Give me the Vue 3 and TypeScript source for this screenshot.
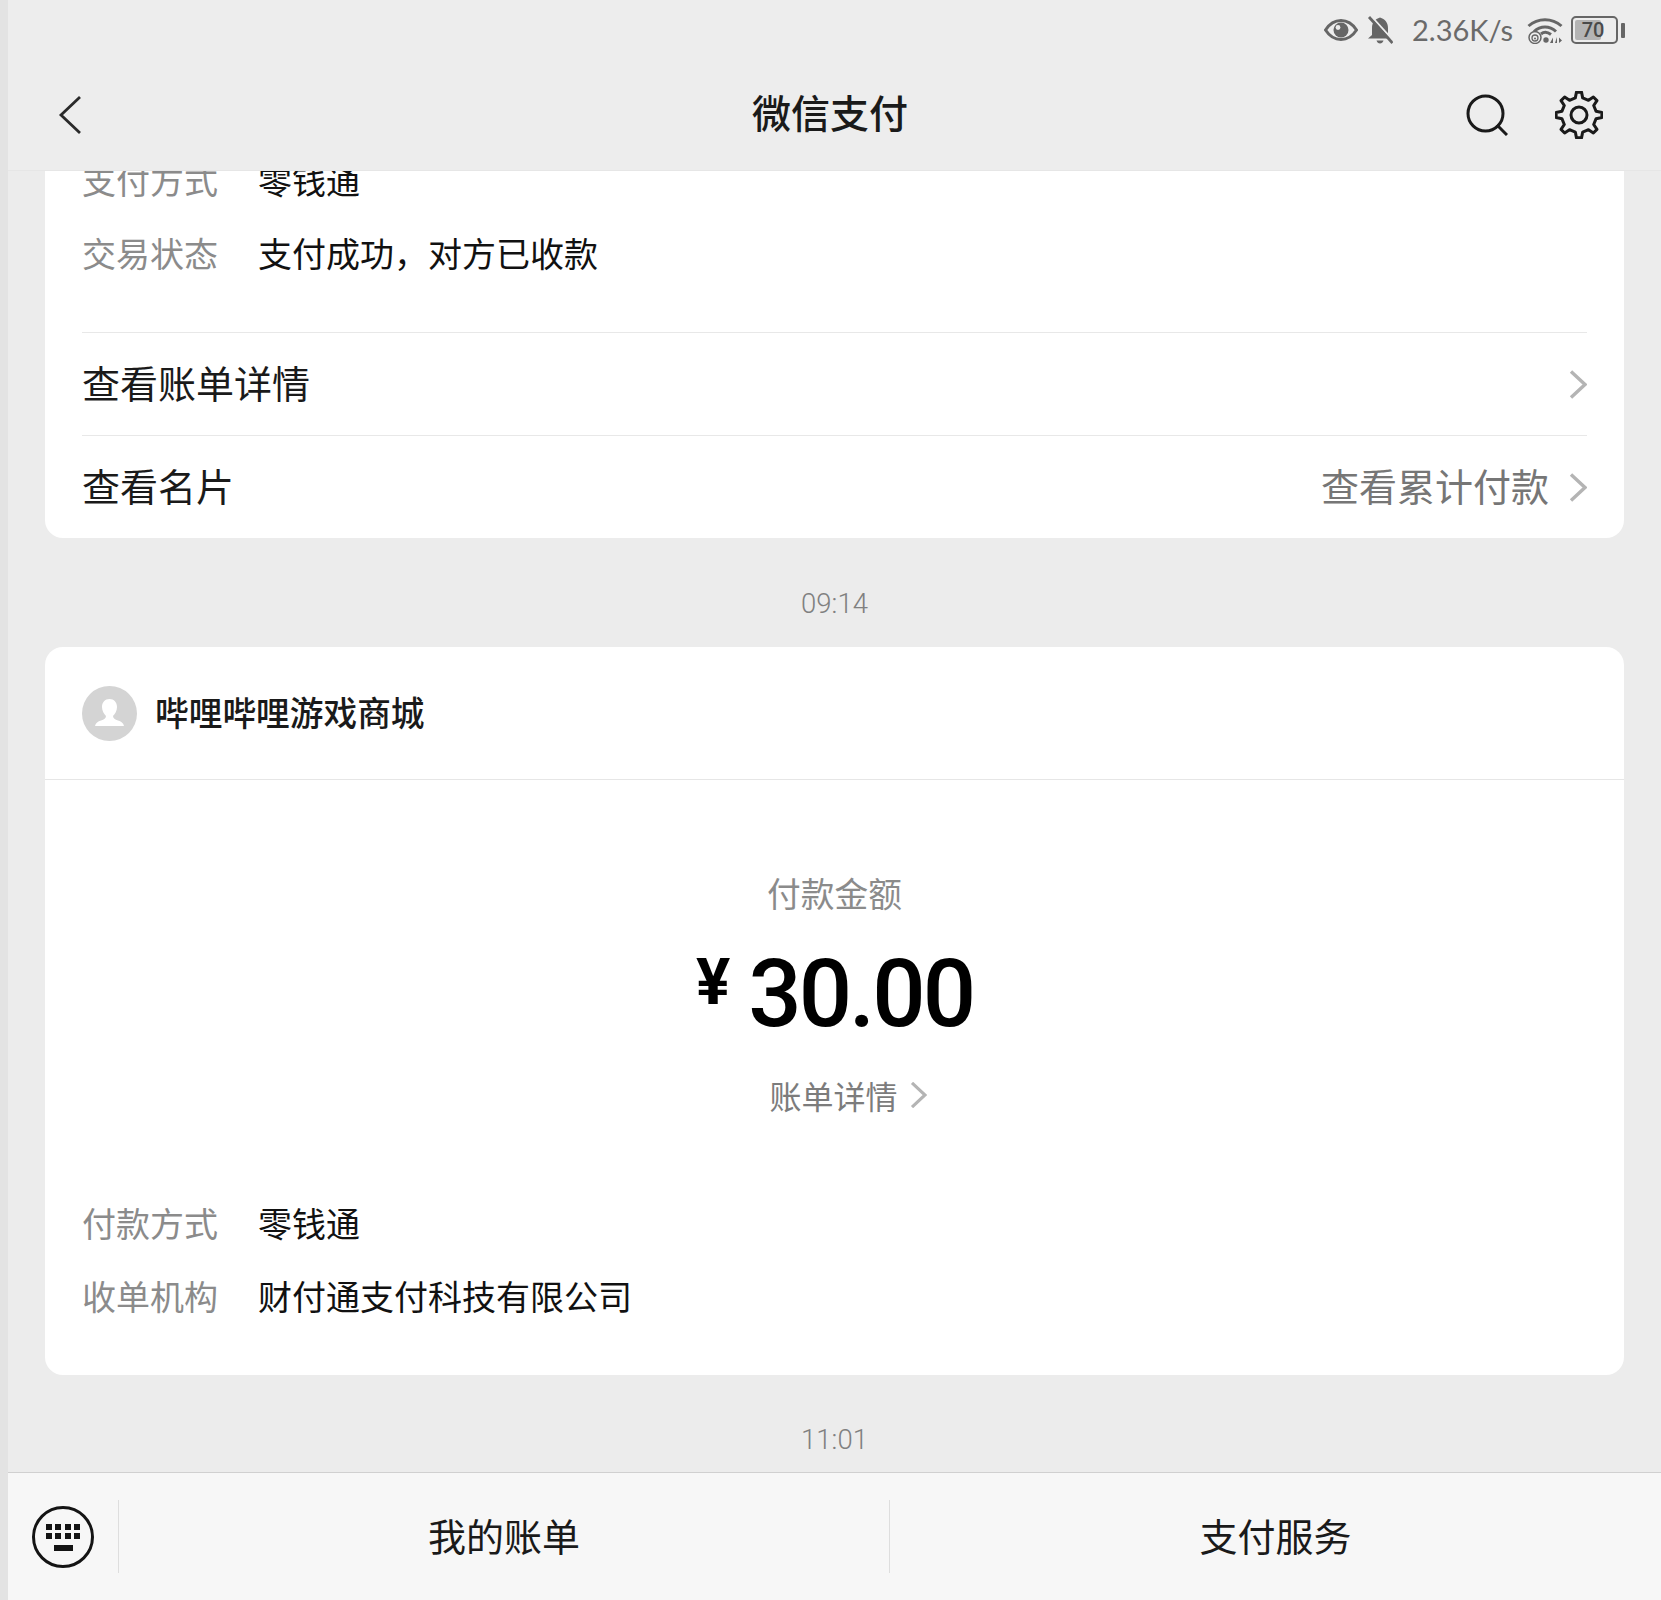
<script setup lang="ts">
const gearPath = (() => {
  const teeth = 8, rOut = 23, rIn = 17.5, c = 24
  const pts: string[] = []
  for (let i = 0; i < teeth; i++) {
    const a = (i * 2 * Math.PI) / teeth - Math.PI / 2
    const step = (2 * Math.PI) / teeth
    const p = (r: number, t: number) =>
      `${(c + r * Math.cos(t)).toFixed(2)} ${(c + r * Math.sin(t)).toFixed(2)}`
    pts.push(`${i === 0 ? 'M' : 'L'}${p(rIn, a - step * 0.27)}`)
    pts.push(`L${p(rOut, a - step * 0.14)}`)
    pts.push(`L${p(rOut, a + step * 0.14)}`)
    pts.push(`L${p(rIn, a + step * 0.27)}`)
  }
  return pts.join(' ') + ' Z'
})()

const keys = [0, 1, 2, 3]
</script>

<template>
  <div class="page">
    <aside class="edge"></aside>
    <div class="screen">
      <header class="top">
        <div class="status">
          <svg class="ic-eye" viewBox="0 0 34 24">
            <path d="M1.500 12C6 5 11 2.500 17 2.500S28 5 32.500 12C28 19 23 21.500 17 21.500S6 19 1.500 12Z" fill="none" stroke="#666" stroke-width="3" />
            <circle cx="17" cy="12" r="7.500" fill="#666" />
            <circle cx="14" cy="9.500" r="2.400" fill="#ededed" />
          </svg>
          <svg class="ic-bell" viewBox="0 0 26 28">
            <path d="M13 1.500C8 3 5 6.500 5 12V19L1 22.500H25L21 19V12C21 6.500 18 3 13 1.500Z" fill="#666" />
            <path d="M9.500 24.500H16.500C16 26.500 14.500 27.500 13 27.500S10 26.500 9.500 24.500Z" fill="#666" />
            <path d="M4.500 0.500L27.500 26" stroke="#ededed" stroke-width="2" />
            <path d="M2 1L25.500 27" stroke="#666" stroke-width="2.800" />
          </svg>
          <span class="speed">2.36K/s</span>
          <svg class="ic-wifi" viewBox="0 0 36 28">
            <path d="M1.500 10C11 1.500 25 1.500 34.500 10" fill="none" stroke="#666" stroke-width="3" />
            <path d="M7 15.500C13.500 9.500 22.500 9.500 29 15.500" fill="none" stroke="#666" stroke-width="3" />
            <path d="M14 18C17 15.500 20 15.500 24 18.500" fill="none" stroke="#666" stroke-width="3" />
            <circle cx="8" cy="21.500" r="6" fill="none" stroke="#666" stroke-width="1.500" />
            <circle cx="8" cy="22" r="3" fill="none" stroke="#666" stroke-width="1.300" />
            <circle cx="8" cy="22.500" r="1" fill="#666" />
            <circle cx="19" cy="24" r="2.700" fill="#666" />
            <path d="M26 27V21.500L23 27ZM30 21V27H28ZM32 21.500L35 24.500L32 27Z" fill="#666" />
          </svg>
          <div class="battery">
            <div class="cell">
              <div class="level"></div>
              <span class="pct">70</span>
            </div>
            <i class="nub"></i>
          </div>
        </div>
        <div class="nav">
          <svg class="ic-back" viewBox="0 0 24 40">
            <path d="M22 2L3 20L22 38" fill="none" stroke="#2a2a2a" stroke-width="2.800" />
          </svg>
          <h1 class="title">微信支付</h1>
          <svg class="ic-search" viewBox="0 0 42 42">
            <circle cx="19.500" cy="19.500" r="17.500" fill="none" stroke="#1a1a1a" stroke-width="3" />
            <path d="M31 31L41 41" stroke="#1a1a1a" stroke-width="3" />
          </svg>
          <svg class="ic-gear" viewBox="0 0 48 48">
            <path :d="gearPath" fill="none" stroke="#1a1a1a" stroke-width="3" stroke-linejoin="round" />
            <circle cx="24" cy="24" r="8" fill="none" stroke="#1a1a1a" stroke-width="3" />
          </svg>
        </div>
      </header>

      <main class="feed">
        <section class="card first">
          <div class="info clipped">
            <span class="label">支付方式</span><span class="value">零钱通</span>
          </div>
          <div class="info">
            <span class="label">交易状态</span><span class="value">支付成功，对方已收款</span>
          </div>
          <div class="links">
            <div class="link">
              <span>查看账单详情</span>
              <svg class="chev" viewBox="0 0 18 28"><path d="M2 1L16 14L2 27" /></svg>
            </div>
            <div class="link">
              <span>查看名片</span>
              <span class="right">查看累计付款</span>
              <svg class="chev" viewBox="0 0 18 28"><path d="M2 1L16 14L2 27" /></svg>
            </div>
          </div>
        </section>

        <div class="time t1">09:14</div>

        <section class="card second">
          <div class="merchant">
            <svg class="avatar" viewBox="0 0 55 55">
              <circle cx="27.500" cy="27.500" r="27.500" fill="#d4d4d4" />
              <path d="M27.500 13C32 13 35 16.500 35 21C35 25 33 28 31 30C31 32 33 33.500 36 34.500C39 35.500 41.500 37 42 40H13C13.500 37 16 35.500 19 34.500C22 33.500 24 32 24 30C22 28 20 25 20 21C20 16.500 23 13 27.500 13Z" fill="#fff" />
            </svg>
            <span class="name">哔哩哔哩游戏商城</span>
          </div>
          <div class="summary">
            <div class="cap">付款金额</div>
            <div class="amount"><span class="yen">¥</span><span class="num">30.00</span></div>
            <div class="detail">
              <span>账单详情</span>
              <svg class="chev small" viewBox="0 0 18 28"><path d="M2 1L16 14L2 27" /></svg>
            </div>
          </div>
          <div class="rows">
            <div class="info">
              <span class="label">付款方式</span><span class="value">零钱通</span>
            </div>
            <div class="info">
              <span class="label">收单机构</span><span class="value">财付通支付科技有限公司</span>
            </div>
          </div>
        </section>

        <div class="time t2">11:01</div>
      </main>

      <footer class="bar">
        <div class="kbd-cell">
          <div class="kbd">
            <div class="keys">
              <i v-for="k in keys" :key="'a' + k"></i>
              <i v-for="k in keys" :key="'b' + k"></i>
            </div>
            <b class="space"></b>
          </div>
        </div>
        <div class="tab narrow">我的账单</div>
        <div class="tab">支付服务</div>
      </footer>
    </div>
  </div>
</template>

<style scoped>
.page {
  display: flex;
  width: 1661px;
  height: 1600px;
  overflow: hidden;
  background: #ececec;
  font-family: "Noto Sans CJK SC", "Noto Sans", sans-serif;
}
.edge {
  width: 8px;
  flex: none;
  background: #e3e3e3;
}
.screen {
  flex: 1;
  min-width: 0;
  display: flex;
  flex-direction: column;
}
.top {
  height: 170px;
  flex: none;
  background: #ededed;
  border-bottom: 1px solid #e6e6e6;
  box-sizing: content-box;
  position: relative;
  z-index: 1;
}
.status {
  height: 60px;
  display: flex;
  align-items: center;
  justify-content: flex-end;
  padding-right: 36px;
  color: #666;
}
.ic-eye { width: 34px; height: 24px; margin-right: 9px; }
.ic-bell { width: 26px; height: 28px; margin-right: 19px; }
.speed {
  font-family: "Lato", sans-serif;
  font-size: 29px;
  font-weight: 400;
  width: 101px;
  margin-right: 14px;
  margin-top: -2px;
  white-space: nowrap;
  color: #6a6a6a;
}
.ic-wifi { width: 36px; height: 28px; margin-right: 8px; }
.battery { display: flex; align-items: center; gap: 3px; }
.cell {
  width: 47px;
  height: 28px;
  box-sizing: border-box;
  border: 2.500px solid #666;
  border-radius: 5px;
  position: relative;
  display: flex;
  align-items: center;
  justify-content: center;
}
.level {
  position: absolute;
  left: 2px;
  top: 2px;
  bottom: 2px;
  width: 26px;
  background: #b4b4b4;
  border-radius: 2px;
}
.pct {
  position: relative;
  font-family: "Roboto", sans-serif;
  font-size: 20px;
  font-weight: 500;
  color: #4a4a4a;
  line-height: 1;
  margin-right: 3px;
}
.nub {
  width: 4px;
  height: 15px;
  background: #666;
  border-radius: 1px;
}
.nav {
  height: 110px;
  display: flex;
  align-items: center;
  position: relative;
  padding: 0 58px 0 51px;
  box-sizing: border-box;
}
.ic-back { width: 24px; height: 40px; margin-left: -1px; }
.title {
  position: absolute;
  left: 0;
  right: 9px;
  top: 21px;
  margin: 0;
  text-align: center;
  font-size: 39px;
  line-height: 60px;
  font-weight: 500;
  color: #1a1a1a;
}
.ic-search { width: 42px; height: 42px; margin-left: auto; margin-right: 47px; }
.ic-gear { width: 48px; height: 48px; }
.feed {
  flex: 1;
  min-height: 0;
  overflow: hidden;
  padding: 0 37px;
  display: flex;
  flex-direction: column;
}
.card {
  background: #fff;
  border-radius: 18px;
  flex: none;
}
.first {
  margin-top: -25px;
  padding: 0 37px;
  height: 392px;
  box-sizing: border-box;
  border-radius: 0 0 18px 18px;
}
.info {
  display: flex;
  height: 73px;
  box-sizing: border-box;
  padding-bottom: 6px;
  align-items: center;
  font-size: 34px;
  white-space: nowrap;
}
.label {
  width: 176px;
  color: #8b8b8b;
}
.value {
  color: #111;
}
.links {
  margin-top: 40px;
}
.link {
  height: 103px;
  border-top: 1px solid #e8e8e8;
  box-sizing: border-box;
  padding-bottom: 6px;
  display: flex;
  align-items: center;
  font-size: 38px;
  color: #1a1a1a;
}
.right {
  color: #767676;
}
.chev {
  width: 18px;
  height: 29px;
  margin-left: 20px;
  flex: none;
  fill: none;
  stroke: #b4b4b4;
  stroke-width: 3.400;
}
.link .chev { margin-top: 6px; }
.link > span:first-child { margin-right: auto; }
.chev.small {
  width: 17px;
  height: 26px;
  margin-left: 12px;
}
.time {
  flex: none;
  box-sizing: border-box;
  display: flex;
  align-items: center;
  justify-content: center;
  font-family: "Roboto", sans-serif;
  font-weight: 300;
  font-size: 27.500px;
  color: #808080;
}
.t1 { height: 109px; padding-top: 21px; }
.t2 { height: 97px; padding-top: 32px; }
.second {
  height: 728px;
  display: flex;
  flex-direction: column;
}
.merchant {
  height: 133px;
  flex: none;
  box-sizing: border-box;
  border-bottom: 1px solid #e6e6e6;
  display: flex;
  align-items: center;
  padding-left: 37px;
}
.avatar { width: 55px; height: 55px; flex: none; }
.name {
  margin-left: 18px;
  margin-top: -4px;
  font-size: 33.700px;
  font-weight: 500;
  color: #1a1a1a;
}
.summary {
  height: 409px;
  flex: none;
  display: flex;
  flex-direction: column;
  align-items: center;
  padding-top: 88px;
  box-sizing: border-box;
}
.cap {
  font-size: 33.700px;
  line-height: 50px;
  color: #8b8b8b;
}
.amount {
  display: flex;
  align-items: flex-start;
  height: 118px;
  margin-top: 17px;
  color: #000;
  font-family: "Roboto", sans-serif;
  font-weight: 500;
  line-height: 118px;
}
.yen {
  font-size: 64px;
  font-weight: 700;
  line-height: 96px;
  margin-right: 18px;
}
.num {
  font-size: 94px;
  letter-spacing: -3px;
}
.detail {
  display: flex;
  align-items: center;
  margin-top: 18px;
  margin-left: 27px;
  font-size: 32px;
  line-height: 48px;
  color: #7c7c7c;
}
.rows {
  padding: 0 37px;
}
.bar {
  height: 128px;
  flex: none;
  box-sizing: border-box;
  background: #f7f7f7;
  border-top: 1px solid #d0d0d0;
  display: flex;
  align-items: center;
  position: relative;
}
.kbd-cell {
  width: 111px;
  height: 73px;
  flex: none;
  box-sizing: border-box;
  border-right: 1px solid #dedede;
  display: flex;
  align-items: center;
  padding-left: 24px;
}
.kbd {
  width: 62px;
  height: 62px;
  box-sizing: border-box;
  border: 3.500px solid #141414;
  border-radius: 50%;
  display: flex;
  flex-direction: column;
  align-items: center;
  padding-top: 15px;
}
.keys {
  display: grid;
  grid-template-columns: repeat(4, 6px);
  grid-auto-rows: 6px;
  gap: 3.500px;
}
.keys i { background: #141414; }
.space {
  width: 19px;
  height: 6px;
  background: #141414;
  margin-top: 6px;
}
.tab {
  flex: 1;
  height: 73px;
  box-sizing: border-box;
  padding-bottom: 4px;
  display: flex;
  align-items: center;
  justify-content: center;
  font-size: 38px;
  color: #1a1a1a;
}
.tab.narrow {
  flex: 0 0 770px;
}
.tab + .tab {
  border-left: 1px solid #dedede;
}
</style>
